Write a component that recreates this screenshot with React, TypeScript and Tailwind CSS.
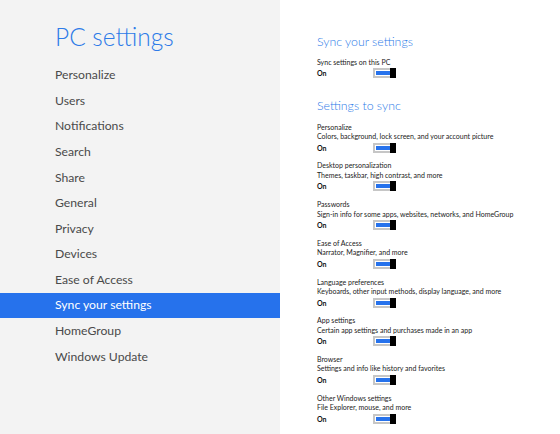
import React from "react";

const navItems = [
  "Personalize",
  "Users",
  "Notifications",
  "Search",
  "Share",
  "General",
  "Privacy",
  "Devices",
  "Ease of Access",
  "Sync your settings",
  "HomeGroup",
  "Windows Update",
];

const groups = [
  ["Personalize", "Colors, background, lock screen, and your account picture"],
  ["Desktop personalization", "Themes, taskbar, high contrast, and more"],
  ["Passwords", "Sign-in info for some apps, websites, networks, and HomeGroup"],
  ["Ease of Access", "Narrator, Magnifier, and more"],
  ["Language preferences", "Keyboards, other input methods, display language, and more"],
  ["App settings", "Certain app settings and purchases made in an app"],
  ["Browser", "Settings and info like history and favorites"],
  ["Other Windows settings", "File Explorer, mouse, and more"],
];

function Toggle() {
  return (
    <div className="flex h-[10px] w-[23px]">
      <div className="flex-1 border-2 border-r-0 border-[#c6c6c6] bg-white p-[1px] pr-0">
        <div className="h-full w-full bg-[#2672ec]" />
      </div>
      <div className="h-full w-[6px] bg-black" />
    </div>
  );
}

function OnRow() {
  return (
    <div className="flex h-[12px] items-center">
      <span className="w-[56px] text-[7px] font-bold leading-[12px] text-[#111]">On</span>
      <Toggle />
    </div>
  );
}

export default function App() {
  return (
    <div
      className="flex h-[434px] w-[560px] overflow-hidden bg-white"
      style={{ fontFamily: 'Lato, "Open Sans", sans-serif' }}
    >
      <div className="flex h-full w-[280px] flex-col bg-[#f3f3f3]">
        <div className="ml-[55px] mt-[22px] mb-[10.5px] h-[30px] text-[24.5px] font-light leading-[30px] text-[#2d7be8]">
          PC settings
        </div>
        <div className="flex flex-col">
          {navItems.map((item) => {
            const active = item === "Sync your settings";
            return (
              <div
                key={item}
                className={
                  active
                    ? "flex h-[25.6px] items-center bg-[#2672ec] pl-[55px] text-[12.2px] text-white"
                    : "flex h-[25.6px] items-center pl-[55px] text-[12.2px] text-[#4a4a4a]"
                }
              >
                {item}
              </div>
            );
          })}
        </div>
      </div>
      <div className="flex flex-1 flex-col pl-[37px] pt-[34px]">
        <div className="h-[16px] text-[12.3px] font-light leading-[16px] text-[#2d7be8]">
          Sync your settings
        </div>
        <div className="mt-[7.75px] h-[9.5px] text-[7px] leading-[9.5px] text-[#222]">
          Sync settings on this PC
        </div>
        <OnRow />
        <div className="mt-[18.75px] h-[16px] text-[12.3px] font-light leading-[16px] text-[#2d7be8]">
          Settings to sync
        </div>
        <div className="mt-[8.75px] flex flex-col gap-[7.7px]">
          {groups.map(([title, desc]) => (
            <div key={title} className="flex flex-col">
              <div className="h-[9.5px] text-[7px] leading-[9.5px] text-[#222]">{title}</div>
              <div className="h-[9.5px] text-[7px] leading-[9.5px] text-[#222]">{desc}</div>
              <OnRow />
            </div>
          ))}
        </div>
      </div>
    </div>
  );
}
